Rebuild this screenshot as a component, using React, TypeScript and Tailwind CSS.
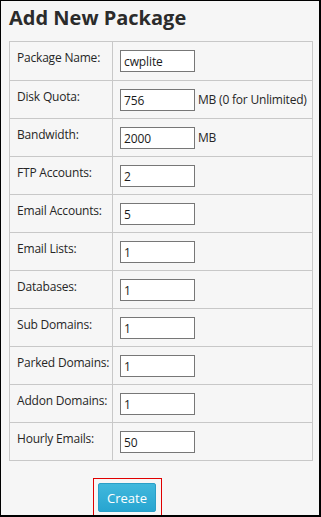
import React from "react";

const rows: { label: string; value: string; suffix?: string }[] = [
  { label: "Package Name:", value: "cwplite" },
  { label: "Disk Quota:", value: "756", suffix: "MB (0 for Unlimited)" },
  { label: "Bandwidth:", value: "2000", suffix: "MB" },
  { label: "FTP Accounts:", value: "2" },
  { label: "Email Accounts:", value: "5" },
  { label: "Email Lists:", value: "1" },
  { label: "Databases:", value: "1" },
  { label: "Sub Domains:", value: "1" },
  { label: "Parked Domains:", value: "1" },
  { label: "Addon Domains:", value: "1" },
  { label: "Hourly Emails:", value: "50" },
];

export default function App() {
  return (
    <div
      className="w-[321px] h-[517px] overflow-hidden border-t border-l border-r-2 border-b-2 border-black bg-[#f6f6f6] text-[#262626]"
      style={{ fontFamily: '"Open Sans", "Noto Sans", sans-serif' }}
    >
      <h1 className="pl-2 pt-[2px] h-[40px] text-[20px] font-bold leading-[30px] text-[#2b2b2b]">
        Add New Package
      </h1>
      <div className="ml-2 w-[304px] border border-[#c8c8c8]">
        {rows.map((r, i) => (
          <div
            key={r.label}
            className={`flex h-[38px] ${i > 0 ? "border-t border-[#c8c8c8]" : ""}`}
          >
            <div className="w-[103px] shrink-0 whitespace-nowrap border-r border-[#c8c8c8] pl-[7px] pt-[6px] text-[12px] tracking-[-0.2px] leading-[20px]">
              {r.label}
            </div>
            <div className="flex items-start whitespace-nowrap pl-[7px] pt-[8px]">
              <div className="w-[75px] h-[22px] border border-[#777] bg-white pl-[3px] text-[12px] tracking-[-0.1px] leading-[22px] text-[#1a1a1a]">
                {r.value}
              </div>
              {r.suffix && (
                <span className="ml-[3px] pt-[1px] text-[12px] tracking-[-0.2px] leading-[20px]">{r.suffix}</span>
              )}
            </div>
          </div>
        ))}
      </div>
      <div className="mt-[17px] ml-[92px] w-[69px] h-[38px] border border-[#e00000] pl-[4px] pt-[4px]">
        <button className="w-[58px] h-[29px] rounded-[2px] border border-[#2a9fc7] bg-gradient-to-b from-[#40b8dd] to-[#27a5d0] text-white text-[13px] leading-[26px]">
          Create
        </button>
      </div>
    </div>
  );
}
